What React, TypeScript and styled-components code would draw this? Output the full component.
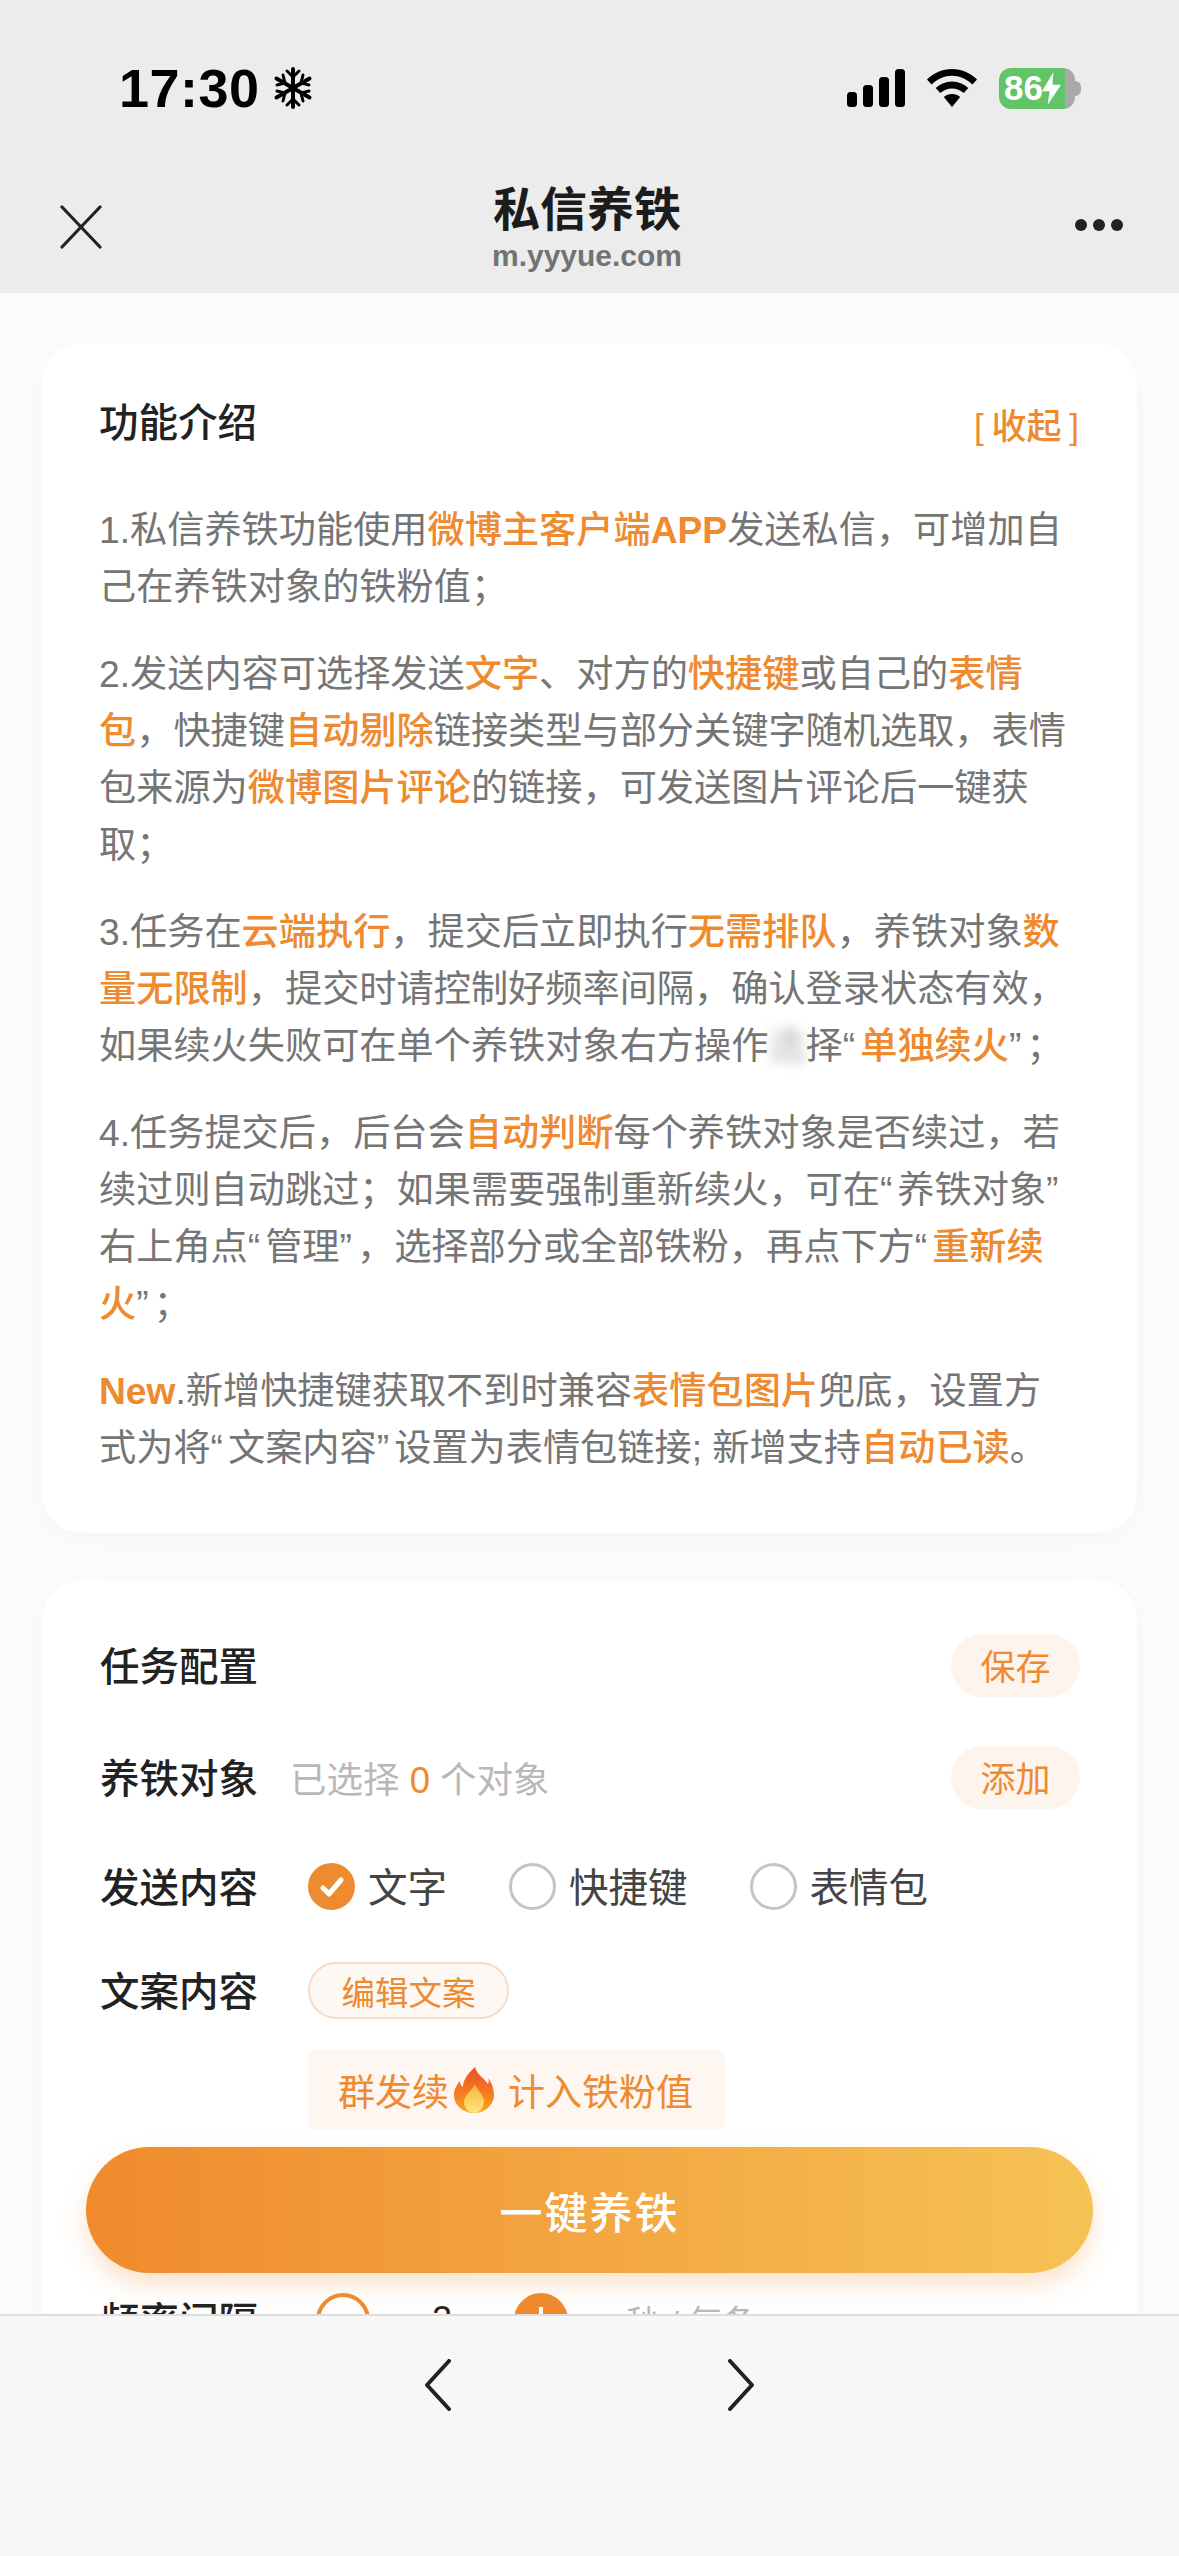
import React from "react";
import styled, { createGlobalStyle } from "styled-components";

const GlobalStyle = createGlobalStyle`
  html, body {
    margin: 0;
    padding: 0;
    background: #f7f7f7;
  }
  * {
    box-sizing: border-box;
  }
`;

const ORANGE = "#ee8a30";
const FONT = `"Liberation Sans", "Noto Sans CJK SC", sans-serif`;

const App = () => {
  return (
    <Page>
      <GlobalStyle />
      <Header>
        <StatusBar>
          <Clock>
            <Time>17:30</Time>
            <svg width="42" height="42" viewBox="0 0 42 42" fill="none" stroke="#000" strokeWidth="4" strokeLinecap="round">
              <path d="M21 2v38M4.5 11.5l33 19M37.5 11.5l-33 19" />
              <path d="M15 4l6 6 6-6M15 38l6-6 6 6M5 18l8-2-2-8M37 18l-8-2 2-8M5 24l8 2-2 8M37 24l-8 2 2 8" strokeWidth="3" />
            </svg>
          </Clock>
          <StatusIcons>
            <svg width="58" height="38" viewBox="0 0 58 38" fill="#000">
              <rect x="0" y="23" width="10" height="15" rx="3.5" />
              <rect x="16" y="16" width="10" height="22" rx="3.5" />
              <rect x="32" y="8" width="10" height="30" rx="3.5" />
              <rect x="48" y="0" width="10" height="38" rx="3.5" />
            </svg>
            <svg width="50" height="38" viewBox="0 0 50 38" fill="#000">
              <path d="M25 0C15.500 0 7 3.800 0 10.500l4.500 5C10.800 9.700 17.500 6.800 25 6.800s14.200 2.900 20.500 8.700l4.500-5C43 3.800 34.500 0 25 0z" />
              <path d="M25 12.500c-6.300 0-11.800 2.300-16.300 6.500l4.500 5c3.300-2.900 7.300-4.600 11.800-4.600s8.500 1.700 11.800 4.600l4.500-5C36.800 14.800 31.300 12.500 25 12.500z" />
              <path d="M25 25c-3.300 0-6 1.100-8.200 3.100L25 38l8.200-9.900C31 26.100 28.300 25 25 25z" />
            </svg>
            <Battery>
              <BatteryLevel>86</BatteryLevel>
              <BatteryBolt viewBox="0 0 20 34" width="19" height="33">
                <path d="M12 0L0 20h8l-2 14 14-21h-9z" fill="#fff" />
              </BatteryBolt>
              <BatteryNub />
            </Battery>
          </StatusIcons>
        </StatusBar>
        <NavBar>
          <NavIcon>
            <svg width="42" height="44" viewBox="0 0 42 44" fill="none" stroke="#222" strokeWidth="3.200" strokeLinecap="round">
              <path d="M2 2l38 40M40 2L2 42" />
            </svg>
          </NavIcon>
          <NavTitle>
            <Title>私信养铁</Title>
            <Domain>m.yyyue.com</Domain>
          </NavTitle>
          <MoreDots>
            <Dot />
            <Dot />
            <Dot />
          </MoreDots>
        </NavBar>
      </Header>

      <Content>
        <IntroCard>
          <CardHead>
            <CardTitle>功能介绍</CardTitle>
            <Collapse>[ 收起 ]</Collapse>
          </CardHead>
          <Para>
            1.私信养铁功能使用<Hl>微博主客户端</Hl><LatinHl>APP</LatinHl>发送私信，可增加自己在养铁对象的铁粉值；
          </Para>
          <Para>
            2.发送内容可选择发送<Hl>文字</Hl>、对方的<Hl>快捷键</Hl>或自己的<Hl>表情包</Hl>，快捷键<Hl>自动剔除</Hl>链接类型与部分关键字随机选取，表情包来源为<Hl>微博图片评论</Hl>的链接，可发送图片评论后一键获取；
          </Para>
          <Para>
            3.任务在<Hl>云端执行</Hl>，提交后立即执行<Hl>无需排队</Hl>，养铁对象<Hl>数量无限制</Hl>，提交时请控制好频率间隔，确认登录状态有效，如果续火失败可在单个养铁对象右方操作<Blur>选</Blur>择<Quote>“</Quote><Hl>单独续火</Hl><Quote>”</Quote>；
          </Para>
          <Para>
            4.任务提交后，后台会<Hl>自动判断</Hl>每个养铁对象是否续过，若续过则自动跳过；如果需要强制重新续火，可在<Quote>“</Quote>养铁对象<Quote>”</Quote>
            <br />
            右上角点<Quote>“</Quote>管理<Quote>”</Quote>，选择部分或全部铁粉，再点下方<Quote>“</Quote><Hl>重新续火</Hl><Quote>”</Quote>；
          </Para>
          <Para>
            <LatinHl>New</LatinHl>.新增快捷键获取不到时兼容<Hl>表情包图片</Hl>兜底，设置方
            <br />
            式为将<Quote>“</Quote>文案内容<Quote>”</Quote>设置为表情包链接; 新增支持<Hl>自动已读</Hl>。
          </Para>
        </IntroCard>

        <ConfigCard>
          <SpacedRow $height={63}>
            <Label>任务配置</Label>
            <PillButton>保存</PillButton>
          </SpacedRow>
          <SpacedRow $height={63} $top={49}>
            <TargetInfo>
              <Label>养铁对象</Label>
              <Muted>
                已选择 <Count>0</Count> 个对象
              </Muted>
            </TargetInfo>
            <PillButton>添加</PillButton>
          </SpacedRow>
          <Row $height={63} $top={46}>
            <Label>发送内容</Label>
            <RadioGroup>
              <RadioItem>
                <RadioOn>
                  <svg width="26" height="24" viewBox="0 0 26 24" fill="none" stroke="#fff" strokeWidth="5" strokeLinecap="round" strokeLinejoin="round">
                    <path d="M4 13l6 6L22 5" />
                  </svg>
                </RadioOn>
                <RadioText>文字</RadioText>
              </RadioItem>
              <RadioItem>
                <RadioOff />
                <RadioText>快捷键</RadioText>
              </RadioItem>
              <RadioItem>
                <RadioOff />
                <RadioText>表情包</RadioText>
              </RadioItem>
            </RadioGroup>
          </Row>
          <Row $height={57} $top={44}>
            <Label>文案内容</Label>
            <EditButton>编辑文案</EditButton>
          </Row>
          <CopyPreview>
            群发续
            <FlameIcon width="40" height="46" viewBox="0 0 40 46">
              <defs>
                <linearGradient id="flame" x1="0" y1="0" x2="0" y2="1">
                  <stop offset="0" stopColor="#e8502a" />
                  <stop offset="0.55" stopColor="#f47a20" />
                  <stop offset="1" stopColor="#f9a825" />
                </linearGradient>
                <linearGradient id="flameCore" x1="0" y1="0" x2="0" y2="1">
                  <stop offset="0" stopColor="#fbb03b" />
                  <stop offset="1" stopColor="#ffe680" />
                </linearGradient>
              </defs>
              <path d="M21 0c2 8 9 11 13 17 1-2 1-4 0-6 5 6 6 13 6 17 0 10-9 18-20 18S0 38 0 28c0-6 3-10 6-14 0 3 1 5 3 6C9 12 15 6 21 0z" fill="url(#flame)" />
              <path d="M21 17c1 5 8 9 9 17 0 7-5 12-10 12S10 41 10 35c0-7 8-11 11-18z" fill="url(#flameCore)" />
            </FlameIcon>
            计入铁粉值
          </CopyPreview>
          <FrequencyRow>
            <Label>频率间隔</Label>
            <Stepper>
              <MinusButton />
              <StepValue>2</StepValue>
              <PlusButton />
              <Unit>秒 / 每条</Unit>
            </Stepper>
          </FrequencyRow>
        </ConfigCard>

        <SubmitButton>一键养铁</SubmitButton>
      </Content>

      <Toolbar>
        <svg width="28" height="52" viewBox="0 0 28 52" fill="none" stroke="#222" strokeWidth="4" strokeLinecap="round" strokeLinejoin="round">
          <path d="M25 2L3 26l22 24" />
        </svg>
        <svg width="28" height="52" viewBox="0 0 28 52" fill="none" stroke="#222" strokeWidth="4" strokeLinecap="round" strokeLinejoin="round">
          <path d="M3 2l22 24L3 50" />
        </svg>
      </Toolbar>
    </Page>
  );
};

export default App;

const Page = styled.div`
  width: 1179px;
  height: 2556px;
  display: flex;
  flex-direction: column;
  overflow: hidden;
  font-family: ${FONT};
  background: #fbfbfe;
`;

const Header = styled.header`
  height: 293px;
  flex: none;
  background: #ececec;
`;

const StatusBar = styled.div`
  height: 176px;
  padding: 0 104px 0 119px;
  display: flex;
  align-items: center;
  justify-content: space-between;
`;

const Clock = styled.div`
  display: flex;
  align-items: center;
  gap: 12px;
`;

const Time = styled.span`
  font-size: 54px;
  font-weight: 700;
  color: #000;
  letter-spacing: 0.5px;
`;

const StatusIcons = styled.div`
  display: flex;
  align-items: center;
  gap: 22px;
`;

const Battery = styled.div`
  position: relative;
  width: 76px;
  height: 41px;
  padding-left: 5px;
  border-radius: 12px;
  display: flex;
  align-items: center;
  background: linear-gradient(90deg, #62c466 0 66px, #a9a9a9 66px);
`;

const BatteryLevel = styled.span`
  font-size: 35px;
  font-weight: 700;
  color: #fff;
`;

const BatteryBolt = styled.svg`
  flex: none;
  margin-left: -1px;
`;

const BatteryNub = styled.span`
  position: absolute;
  right: -6px;
  top: 13px;
  width: 6px;
  height: 15px;
  border-radius: 0 8px 8px 0;
  background: #a9a9a9;
`;

const NavBar = styled.div`
  height: 117px;
  padding: 6px 65px 0 60px;
  display: grid;
  grid-template-columns: 1fr auto 1fr;
  align-items: start;
`;

const NavIcon = styled.div`
  padding-top: 23px;
`;

const NavTitle = styled.div`
  display: flex;
  flex-direction: column;
  align-items: center;
`;

const Title = styled.div`
  font-size: 47px;
  line-height: 56px;
  font-weight: 700;
  color: #1c1c1c;
`;

const Domain = styled.div`
  font-size: 30px;
  line-height: 36px;
  font-weight: 700;
  color: #737373;
`;

const MoreDots = styled.div`
  justify-self: end;
  display: flex;
  gap: 6px;
  margin-right: -9px;
  padding-top: 37px;
`;

const Dot = styled.span`
  width: 12px;
  height: 12px;
  border-radius: 50%;
  background: #222;
`;

const Content = styled.main`
  position: relative;
  flex: 1;
  min-height: 0;
  overflow: hidden;
  padding: 50px 42px 0;
  background: #fbfbfe;
`;

const IntroCard = styled.section`
  background: #fff;
  border-radius: 40px;
  padding: 52px 58px 26px;
  box-shadow: 0 6px 30px rgba(240, 160, 120, 0.07);
`;

const CardHead = styled.div`
  display: flex;
  align-items: center;
  justify-content: space-between;
  margin-bottom: 50px;
`;

const CardTitle = styled.h2`
  margin: 0 0 0 -1px;
  font-size: 39.500px;
  line-height: 57px;
  font-weight: 500;
  color: #222;
`;

const Collapse = styled.span`
  font-size: 35px;
  font-weight: 500;
  word-spacing: -2px;
  color: ${ORANGE};
`;

const Para = styled.p`
  margin: 0 -4px 30px -1px;
  font-size: 37.200px;
  line-height: 57px;
  color: #757575;
`;

const Hl = styled.span`
  color: ${ORANGE};
  font-weight: 500;
`;

const LatinHl = styled(Hl)`
  font-weight: 700;
`;

const Quote = styled.span`
  letter-spacing: 5px;
`;

const Blur = styled.span`
  display: inline-block;
  filter: blur(6px);
  opacity: 0.55;
`;

const ConfigCard = styled.section`
  margin-top: 47px;
  background: #fff;
  border-radius: 40px 40px 0 0;
  padding: 54px 57px 60px 58px;
  box-shadow: 0 6px 30px rgba(240, 160, 120, 0.07);
`;

const Row = styled.div<{ $height: number; $top?: number }>`
  display: flex;
  align-items: center;
  height: ${({ $height }) => $height}px;
  margin-top: ${({ $top }) => $top || 0}px;
`;

const SpacedRow = styled(Row)`
  justify-content: space-between;
`;

const TargetInfo = styled.div`
  display: flex;
  align-items: center;
  gap: 32px;
`;

const Label = styled.span`
  padding-bottom: 4px;
  font-size: 39.500px;
  font-weight: 500;
  color: #222;
  white-space: nowrap;
`;

const Muted = styled.span`
  font-size: 36.500px;
  color: #b8b8b8;
`;

const Count = styled.span`
  color: ${ORANGE};
`;

const PillButton = styled.button`
  width: 129px;
  height: 100%;
  padding: 0 0 3px;
  border: none;
  border-radius: 31px;
  background: #fdf4ee;
  font-family: inherit;
  font-size: 35px;
  color: ${ORANGE};
`;

const RadioGroup = styled.div`
  display: flex;
  gap: 62px;
  margin-left: 50px;
`;

const RadioItem = styled.div`
  display: flex;
  align-items: center;
  gap: 13px;
`;

const RadioText = styled.span`
  padding-bottom: 4px;
  font-size: 39.500px;
  color: #444;
`;

const RadioOn = styled.span`
  width: 47px;
  height: 47px;
  border-radius: 50%;
  background: ${ORANGE};
  display: flex;
  align-items: center;
  justify-content: center;
`;

const RadioOff = styled.span`
  width: 47px;
  height: 47px;
  border-radius: 50%;
  border: 3px solid #c4c4c4;
`;

const EditButton = styled.button`
  width: 201px;
  height: 100%;
  margin-left: 50px;
  padding: 0;
  border: 2px solid #f8dcc8;
  border-radius: 29px;
  background: #fef8f4;
  font-family: inherit;
  font-size: 33.500px;
  color: ${ORANGE};
`;

const CopyPreview = styled.div`
  display: flex;
  align-items: center;
  gap: 5px;
  width: 417px;
  height: 80px;
  margin: 31px 0 0 208px;
  padding-left: 30px;
  border-radius: 8px;
  background: #fdf6f1;
  font-size: 37px;
  color: ${ORANGE};
  white-space: nowrap;
`;

const FlameIcon = styled.svg`
  flex: none;
  margin-right: 9px;
`;

const FrequencyRow = styled.div`
  display: flex;
  align-items: center;
  height: 54px;
  margin-top: 163px;
`;

const Stepper = styled.div`
  display: flex;
  align-items: center;
  margin-left: 58px;
`;

const MinusButton = styled.span`
  width: 54px;
  height: 54px;
  border-radius: 50%;
  border: 4px solid ${ORANGE};
`;

const StepValue = styled.span`
  width: 144px;
  text-align: center;
  font-size: 36px;
  color: #222;
`;

const PlusButton = styled.span`
  position: relative;
  width: 54px;
  height: 54px;
  border-radius: 50%;
  background: ${ORANGE};
  &::after {
    content: "";
    position: absolute;
    left: 25px;
    top: 14px;
    width: 4px;
    height: 26px;
    background: #fff;
  }
`;

const Unit = styled.span`
  margin-left: 58px;
  font-size: 34px;
  color: #b8b8b8;
`;

const SubmitButton = styled.button`
  position: absolute;
  left: 86px;
  top: 1854px;
  width: 1007px;
  height: 126px;
  padding: 0;
  border: none;
  border-radius: 63px;
  background: linear-gradient(90deg, #f08a2d 0%, #f6c254 100%);
  box-shadow: 0 12px 24px rgba(240, 150, 70, 0.28);
  font-family: inherit;
  font-size: 43px;
  font-weight: 500;
  letter-spacing: 2px;
  color: #fff;
`;

const Toolbar = styled.footer`
  position: relative;
  height: 242px;
  flex: none;
  padding-top: 43px;
  display: flex;
  justify-content: center;
  align-items: flex-start;
  gap: 275px;
  background: #f7f7f7;
  border-top: 2px solid #dedede;
`;
